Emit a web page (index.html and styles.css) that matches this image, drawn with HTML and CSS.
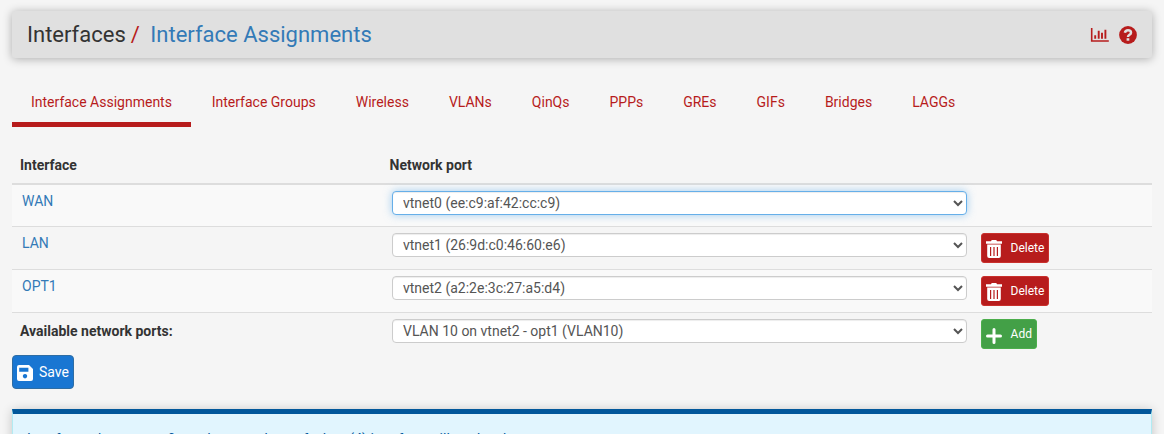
FILE: index.html
```html
<!DOCTYPE html>
<html lang="en">
<head>
<meta charset="utf-8">
<title>Interfaces: Interface Assignments</title>
<link rel="stylesheet" href="styles.css">
</head>
<body>
<header class="header">
  <h1 class="breadcrumb"><span>Interfaces</span><span class="slash">/</span><a href="#">Interface Assignments</a></h1>
  <div class="context-links">
    <a href="#" aria-label="Status"><svg class="chart" width="19" height="14" viewBox="0 0 19 14"><path d="M1.7 0V13H18.8" fill="none" stroke="currentColor" stroke-width="1.6"/><path d="M5.2 10.8V7.3M8.7 10.8V2.7M12 10.8V4.8M15.4 10.8V1.7" fill="none" stroke="currentColor" stroke-width="1.9"/></svg></a>
    <a href="#" aria-label="Help"><svg class="help" width="18" height="18" viewBox="0 0 18 18"><circle cx="9" cy="9" r="8.9" fill="currentColor"/><path d="M5.9 6.8C6.2 4.9 7.3 4.2 9 4.2C10.7 4.2 12 5.1 12 6.7C12 8.9 9 8.7 9 10.9" fill="none" stroke="#e0e0e0" stroke-width="2.5"/><path d="M7.6 12.2h2.7v2.5H7.6z" fill="#e0e0e0"/></svg></a>
  </div>
</header>
<nav class="tabs">
  <a class="tab active" href="#">Interface Assignments</a>
  <a class="tab" href="#">Interface Groups</a>
  <a class="tab" href="#">Wireless</a>
  <a class="tab" href="#">VLANs</a>
  <a class="tab" href="#">QinQs</a>
  <a class="tab" href="#">PPPs</a>
  <a class="tab" href="#">GREs</a>
  <a class="tab" href="#">GIFs</a>
  <a class="tab" href="#">Bridges</a>
  <a class="tab" href="#">LAGGs</a>
</nav>
<form>
  <table class="assignments">
    <colgroup><col class="col-name"><col class="col-port"><col></colgroup>
    <thead>
      <tr><th>Interface</th><th>Network port</th><th></th></tr>
    </thead>
    <tbody>
      <tr>
        <td><a class="ifname" href="#">WAN</a></td>
        <td><select class="port focused"><option>vtnet0 (ee:c9:af:42:cc:c9)</option></select></td>
        <td></td>
      </tr>
      <tr>
        <td><a class="ifname" href="#">LAN</a></td>
        <td><select class="port"><option>vtnet1 (26:9d:c0:46:60:e6)</option></select></td>
        <td><button type="button" class="btn small danger"><svg width="16" height="18" viewBox="0 0 16 18"><path d="M0 1.3h5L5.7 0h4.6L11 1.3h5v2.4H0z" fill="#fff"/><path fill-rule="evenodd" fill="#fff" d="M1.2 4.6h13.6V16q0 2-2 2H3.2q-2 0-2-2zM4 7v9h1.2V7zM7.4 7v9h1.2V7zM10.8 7v9H12V7z"/></svg><span>Delete</span></button></td>
      </tr>
      <tr>
        <td><a class="ifname" href="#">OPT1</a></td>
        <td><select class="port"><option>vtnet2 (a2:2e:3c:27:a5:d4)</option></select></td>
        <td><button type="button" class="btn small danger"><svg width="16" height="18" viewBox="0 0 16 18"><path d="M0 1.3h5L5.7 0h4.6L11 1.3h5v2.4H0z" fill="#fff"/><path fill-rule="evenodd" fill="#fff" d="M1.2 4.6h13.6V16q0 2-2 2H3.2q-2 0-2-2zM4 7v9h1.2V7zM7.4 7v9h1.2V7zM10.8 7v9H12V7z"/></svg><span>Delete</span></button></td>
      </tr>
      <tr>
        <th>Available network ports:</th>
        <td><select class="port"><option>VLAN 10 on vtnet2 - opt1 (VLAN10)</option></select></td>
        <td><button type="button" class="btn small success"><svg width="16" height="16" viewBox="0 0 16 16"><path d="M8 1.5v13M1.5 8h13" stroke="#fff" stroke-width="3" stroke-linecap="round"/></svg><span>Add</span></button></td>
      </tr>
    </tbody>
  </table>
  <button type="button" class="btn save"><svg width="16" height="16" viewBox="0 0 16 16"><path fill-rule="evenodd" fill="#fff" d="M2 0h10l4 4v10q0 2-2 2H2q-2 0-2-2V2q0-2 2-2zM2.2 2.8v4h9.2v-4zM8 9a2.2 2.2 0 1 0 .01 0z"/></svg><span>Save</span></button>
</form>
<div class="alert">Interfaces that are configured as members of a lagg(4) interface will not be shown.</div>
</body>
</html>
```
FILE: styles.css
```css
* { box-sizing: border-box; }
html { height: 100%; overflow: hidden; }
body {
  margin: 0;
  height: 434px;
  padding: 11px 12px 0;
  overflow: hidden;
  background: #f5f5f5;
  color: #333;
  font: 14px/20px Roboto, "Liberation Sans", sans-serif;
}
a { color: #337ab7; text-decoration: none; }

.header {
  display: flex;
  align-items: center;
  justify-content: space-between;
  height: 47px;
  padding: 0 15px;
  border-radius: 3px;
  background: #e0e0e0;
  box-shadow: 0 1px 10px rgba(0, 0, 0, .3);
}
.breadcrumb { display: flex; margin: 0; font-size: 22px; font-weight: 400; line-height: 24px; }
.slash { margin: 0 10.5px 0 5px; color: #b71c1c; }
.context-links { display: flex; align-items: center; gap: 10px; padding-top: 1px; }
.context-links a { display: flex; color: #b71c1c; }

.tabs { display: flex; height: 69px; padding-top: 24px; }
.tab {
  height: 45px;
  padding: 10px 20px 0 20px;
  border-bottom: 5px solid transparent;
  color: #b71c1c;
}
.tab.active { margin-right: .8px; padding: 10px 19px 0; border-color: #b71c1c; }

.assignments { width: 100%; margin-top: 18px; border-spacing: 0; table-layout: fixed; }
.col-name { width: 370px; }
.col-port { width: 591px; }
.assignments th { padding: 10px 8px 0; text-align: left; vertical-align: top; font-weight: 700; }
.assignments thead th { height: 40px; border-bottom: 2px solid #ddd; }
.assignments thead th:nth-child(2) { padding-left: 7.6px; }
.assignments tbody td { height: 43px; padding: 6px 8px 0 10px; border-top: 1px solid #ddd; vertical-align: top; }
.assignments tbody th { padding-top: 8px; border-top: 1px solid #ddd; }
.assignments tbody tr:first-child td { height: 41px; border-top: 0; }
.assignments tbody tr:nth-child(odd) { background: #f9f9f9; }
.assignments tbody tr:last-child td { height: 43px; }
.ifname { display: block; }
.port {
  display: block;
  width: 575px;
  height: 24px;
  padding: 0 5px 0 6px;
  border: 1px solid #ccc;
  border-radius: 4px;
  background-color: #fff;
  box-shadow: inset 0 1px 1px rgba(0, 0, 0, .075);
  color: #555;
  font: 14px/20px Roboto, "Liberation Sans", sans-serif;
}
.port.focused { border-color: #66afe9; box-shadow: inset 0 1px 1px rgba(0, 0, 0, .075), 0 0 8px rgba(102, 175, 233, .6); }

.btn {
  display: flex;
  align-items: flex-start;
  border: 1px solid;
  border-radius: 3px;
  color: #fff;
  font-family: Roboto, "Liberation Sans", sans-serif;
}
.btn.small { height: 30px; margin-left: -2px; padding: 4px 4px 4px 3.6px; gap: 9px; font-size: 12px; line-height: 20px; }
.btn.small svg { margin-top: 2px; }
.danger { background: #b71c1c; border-color: #c9302c; }
.success { background: #43a047; border-color: #4cae4c; }
.btn.success { padding-right: 4.4px; }
.btn.success svg { margin-top: 4px; }
.btn.save { height: 34px; padding: 6px 4px; gap: 6px; border-radius: 4px; background: #1976d2; border-color: #2e6da4; font-size: 14px; line-height: 20px; }
.save svg { margin-top: 3px; }

.alert {
  height: 60px;
  margin-top: 20px;
  padding: 15px 14px;
  border: 1px solid #b2ebf2;
  border-top: 5px solid #01579b;
  background: #e1f5fe;
  box-shadow: 0 1px 10px rgba(0, 0, 0, .2);
  color: #01579b;
}
```
